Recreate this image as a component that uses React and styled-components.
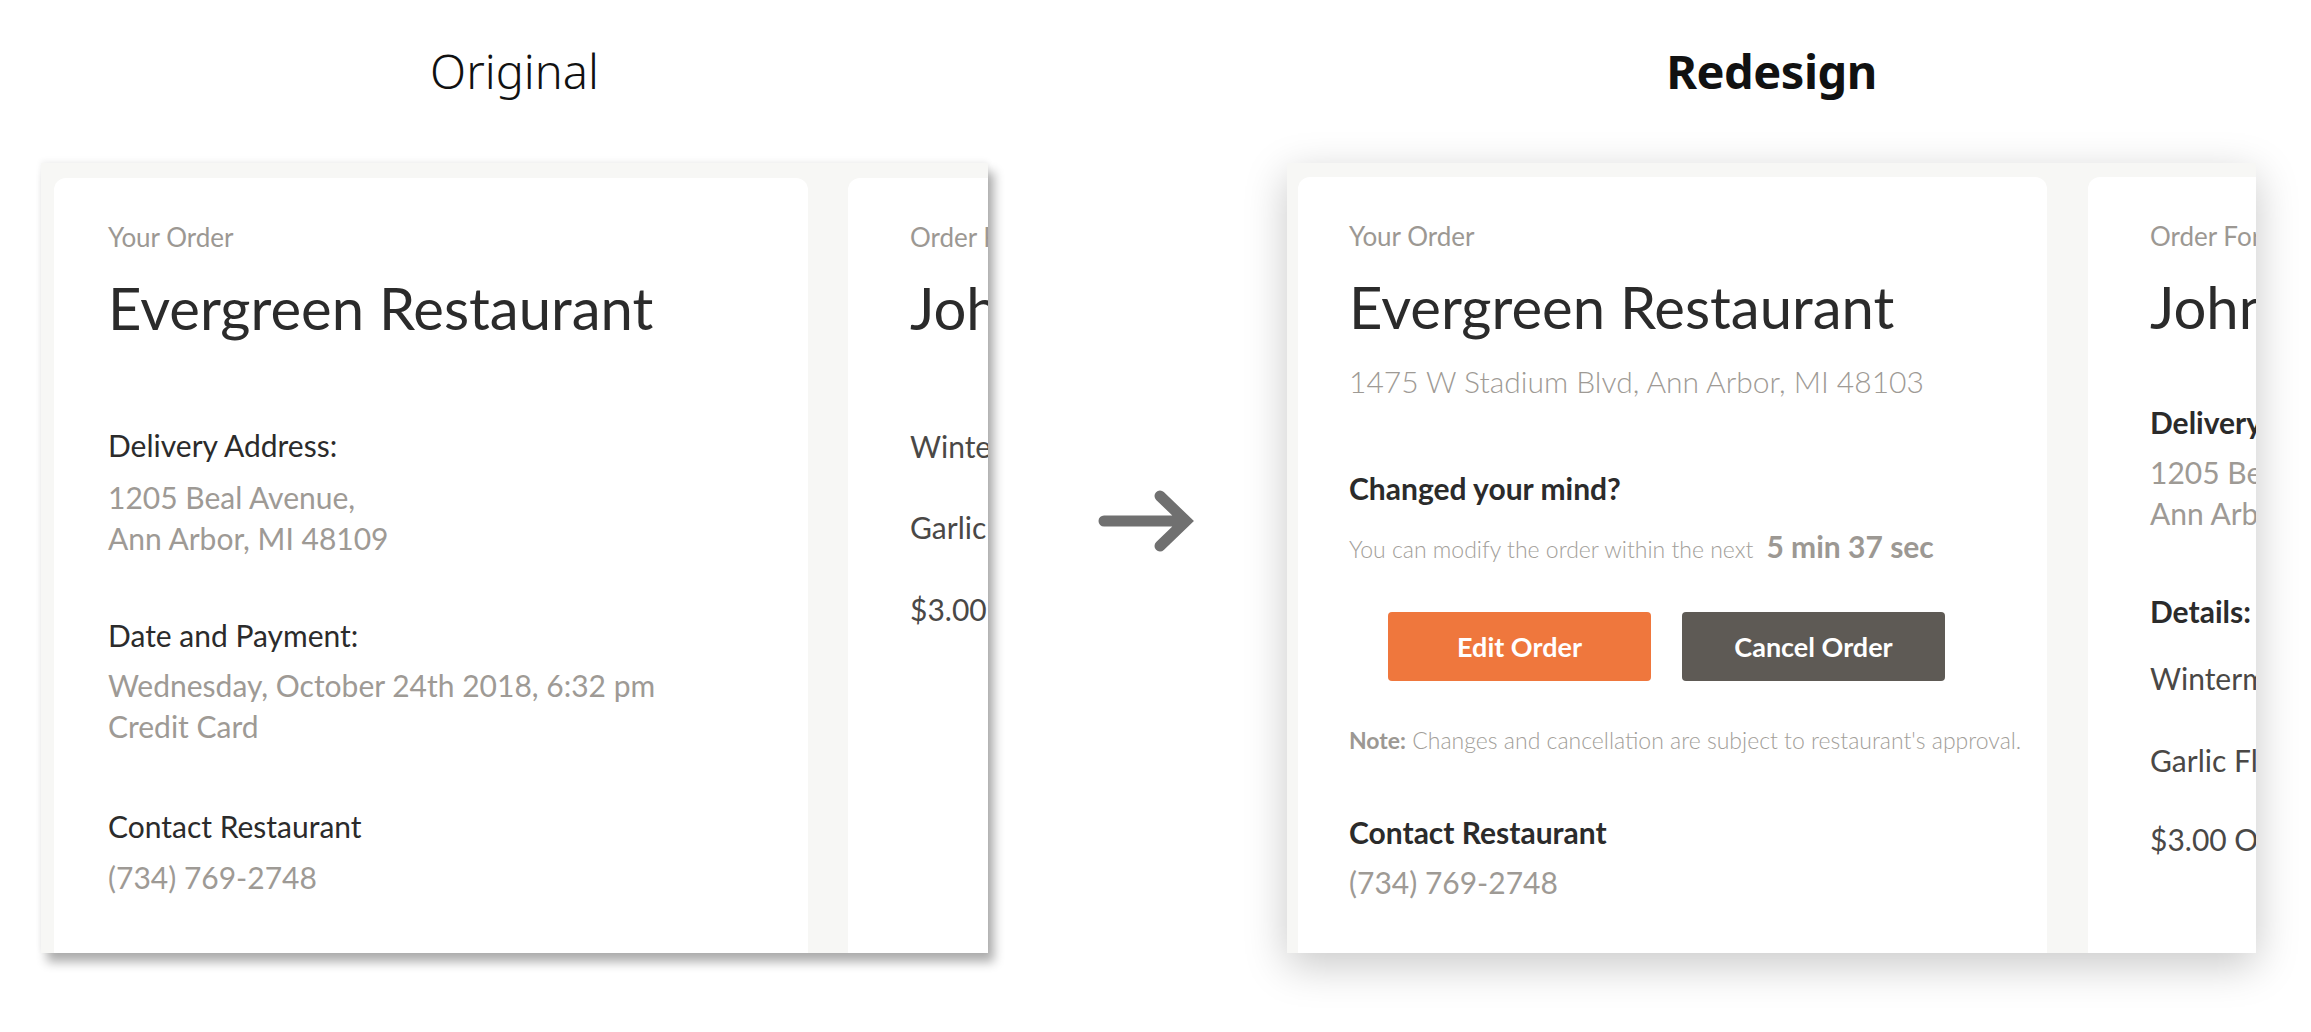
import React from 'react'
import styled, { createGlobalStyle } from 'styled-components'

const Global = createGlobalStyle`
  * { box-sizing: border-box; }
  body {
    margin: 0;
    background: #ffffff;
    font-family: Lato, "Open Sans", sans-serif;
  }
`

const Page = styled.div`
  display: flex;
  align-items: flex-start;
  padding: 44px 0 0 41px;
  width: 2311px;
  height: 1032px;
  overflow: hidden;
`

const Column = styled.div`
  flex: 0 0 ${p => p.$w}px;
  width: ${p => p.$w}px;
  min-width: 0;
  display: flex;
  flex-direction: column;
`

const Heading = styled.h2`
  margin: 0 0 65px;
  height: 54px;
  font-family: "Noto Sans", "Open Sans", sans-serif;
  font-size: 47px;
  line-height: 54px;
  font-weight: ${p => (p.$bold ? 700 : 300)};
  color: #111;
  text-align: center;
  letter-spacing: ${p => (p.$bold ? '-0.5px' : '0')};
`

const ArrowSlot = styled.div`
  flex: 0 0 299px;
  display: flex;
  justify-content: center;
  padding: 442px 0 0 12px;
`

const Board = styled.div`
  display: flex;
  gap: ${p => p.$gap}px;
  width: 100%;
  height: 790px;
  padding: ${p => p.$pt}px 0 0 ${p => p.$pl}px;
  background: #f7f7f5;
  overflow: hidden;
  box-shadow: ${p => p.$shadow};
`

const Card = styled.div`
  flex: 0 0 ${p => p.$w}px;
  background: #ffffff;
  border-radius: 12px 12px 0 0;
  padding: 44px 0 0 ${p => p.$pl}px;
  white-space: nowrap;
`

const Eyebrow = styled.div`
  font-size: 26px;
  line-height: 31.2px;
  color: #9c9893;
`

const Title = styled.div`
  margin-top: 20px;
  font-size: 58px;
  line-height: 69.6px;
  color: #2b2b2b;
`

const Label = styled.div`
  margin-top: ${p => p.$mt}px;
  font-size: 30px;
  line-height: 40px;
  font-weight: ${p => (p.$bold ? 700 : 400)};
  color: #2b2b2b;
`

const Value = styled.div`
  margin-top: ${p => p.$mt}px;
  font-size: 30px;
  line-height: ${p => (p.$multi ? '41.5px' : '40px')};
  font-weight: ${p => (p.$light ? 300 : 400)};
  color: ${p => (p.$dark ? '#4a4846' : '#9e9a95')};
`

const Small = styled.div`
  margin-top: ${p => p.$mt}px;
  font-size: 23px;
  line-height: 40px;
  font-weight: 300;
  color: #a29e99;
`

const Timer = styled.span`
  margin-left: 13px;
  font-size: 30px;
  line-height: 1;
  font-weight: 700;
  color: #9c9893;
`

const NoteTag = styled.span`
  font-weight: 700;
  color: #9c9893;
`

const Actions = styled.div`
  display: flex;
  justify-content: center;
  gap: 31px;
  margin: 43px 0 0 -57px;
  width: 749px;
`

const Button = styled.button`
  width: 263px;
  height: 69px;
  border: none;
  border-radius: 4px;
  background: ${p => p.$bg};
  color: #ffffff;
  font-family: Lato, "Open Sans", sans-serif;
  font-size: 27px;
  font-weight: 700;
  cursor: pointer;
`

const Arrow = () => (
  <svg width="100" height="70" viewBox="1098 486 100 70">
    <path
      d="M1108 521 H1188 M1164 496 L1190 521 L1164 546"
      fill="none"
      stroke="#707070"
      strokeWidth="11"
      strokeLinecap="round"
      strokeLinejoin="miter"
    />
  </svg>
)

export default function App() {
  return (
    <>
      <Global />
      <Page>
        <Column $w={947}>
          <Heading>Original</Heading>
          <Board $gap={40} $pt={15} $pl={13} $shadow="6px 9px 10px rgba(0,0,0,0.32), 0 -2px 6px rgba(0,0,0,0.06)">
            <Card $w={754} $pl={54}>
              <Eyebrow>Your Order</Eyebrow>
              <Title>Evergreen Restaurant</Title>
              <Label $mt={82}>Delivery Address:</Label>
              <Value $mt={12} $multi>
                1205 Beal Avenue,
                <br />
                Ann Arbor, MI 48109
              </Value>
              <Label $mt={55}>Date and Payment:</Label>
              <Value $mt={10} $multi>
                Wednesday, October 24th 2018, 6:32 pm
                <br />
                Credit Card
              </Value>
              <Label $mt={58}>Contact Restaurant</Label>
              <Value $mt={11}>(734) 769-2748</Value>
            </Card>
            <Card $w={754} $pl={62}>
              <Eyebrow>Order For</Eyebrow>
              <Title>John Smith</Title>
              <Value $mt={83} $dark>Wintermelon Milk Tea</Value>
              <Value $mt={41} $dark>Garlic Flatbread</Value>
              <Value $mt={42} $dark>$3.00 Off Promotion</Value>
            </Card>
          </Board>
        </Column>

        <ArrowSlot>
          <Arrow />
        </ArrowSlot>

        <Column $w={969}>
          <Heading $bold>Redesign</Heading>
          <Board $gap={41} $pt={14} $pl={11} $shadow="0 12px 40px rgba(0,0,0,0.22)">
            <Card $w={749} $pl={51}>
              <Eyebrow>Your Order</Eyebrow>
              <Title>Evergreen Restaurant</Title>
              <Value $mt={19} $light>1475 W Stadium Blvd, Ann Arbor, MI 48103</Value>
              <Label $mt={67} $bold>Changed your mind?</Label>
              <Small $mt={21}>
                You can modify the order within the next
                <Timer>5 min 37 sec</Timer>
              </Small>
              <Actions>
                <Button $bg="#ef773d">Edit Order</Button>
                <Button $bg="#5e5a55">Cancel Order</Button>
              </Actions>
              <Small $mt={39}>
                <NoteTag>Note:</NoteTag> Changes and cancellation are subject to restaurant's approval.
              </Small>
              <Label $mt={52} $bold>Contact Restaurant</Label>
              <Value $mt={10}>(734) 769-2748</Value>
            </Card>
            <Card $w={749} $pl={62}>
              <Eyebrow>Order For</Eyebrow>
              <Title>John Smith</Title>
              <Label $mt={60} $bold>Delivery Address:</Label>
              <Value $mt={10} $multi>
                1205 Beal Avenue,
                <br />
                Ann Arbor, MI 48109
              </Value>
              <Label $mt={56} $bold>Details:</Label>
              <Value $mt={27} $dark>Wintermelon Milk Tea</Value>
              <Value $mt={42} $dark>Garlic Flatbread</Value>
              <Value $mt={39} $dark>$3.00 Off Promotion</Value>
            </Card>
          </Board>
        </Column>
      </Page>
    </>
  )
}
